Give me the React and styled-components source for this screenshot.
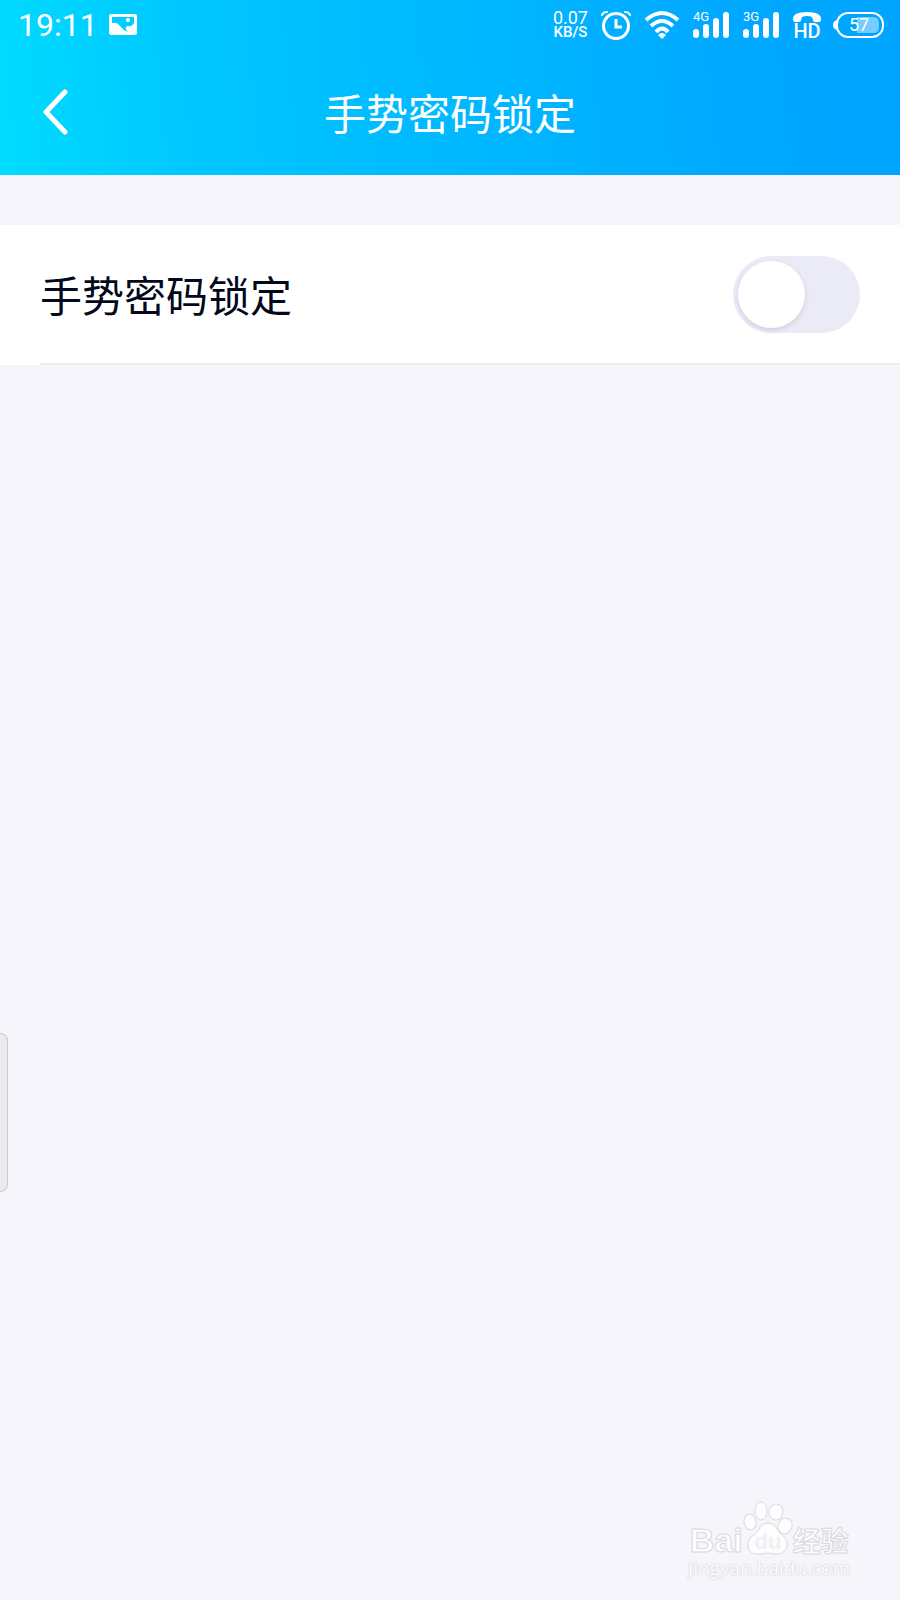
import styled, { createGlobalStyle } from "styled-components";

import { useState } from "react";

export default function App(){
    const [locked, setLocked] = useState(false);

    return(
        <>
            <GlobalStyle />
            <Page>
                <Header>
                    <StatusBar />
                    <NavBar>
                        <BackButton aria-label="返回">
                            <svg width="26" height="46" viewBox="0 0 26 46">
                                <path d="M23 3 L4 23 L23 43" fill="none" stroke="white" strokeWidth="5" strokeLinecap="round" strokeLinejoin="round" />
                            </svg>
                        </BackButton>
                        <Title>手势密码锁定</Title>
                        <span />
                    </NavBar>
                </Header>
                <Setting>
                    <SettingContent>
                        <label htmlFor="gesture-lock">手势密码锁定</label>
                        <Switch
                            id="gesture-lock"
                            type="checkbox"
                            role="switch"
                            checked={locked}
                            onChange={() => setLocked(!locked)}
                        />
                    </SettingContent>
                </Setting>
                <EdgeHandle />
                <Watermark />
            </Page>
        </>
    );
}

function StatusBar(){
    return(
        <StatusContent>
            <StatusGroup gap={11}>
                <Time>19:11</Time>
                <svg width="28" height="24" viewBox="0 0 28 24">
                    <path fillRule="evenodd" fill="white" d="M2 1 H26 Q28 1 28 3 V20 Q28 22 26 22 H2 Q0 22 0 20 V3 Q0 1 2 1 Z M3 4 V10 Q8 9 11 13 Q14 17 19 19 Q15 15 18 13 Q23 14 25 10 V4 Z" />
                    <circle cx="19" cy="7" r="2" fill="white" />
                </svg>
            </StatusGroup>
            <StatusGroup gap={13}>
                <Speed>
                    <Rate>0.07</Rate>
                    <Unit>KB/S</Unit>
                </Speed>
                <svg width="30" height="30" viewBox="0 0 30 30" fill="none" stroke="white">
                    <circle cx="15" cy="16" r="12.500" strokeWidth="3" />
                    <path d="M15 9 V17 H21" strokeWidth="3" />
                    <path d="M1 5 Q2 2 6 2 M24 2 Q28 2 29 5" strokeWidth="2" strokeLinecap="round" />
                </svg>
                <svg width="36" height="30" viewBox="0 0 36 30" fill="none" stroke="white" strokeWidth="4">
                    <path d="M2 10 Q18 -4 34 10" />
                    <path d="M7 16 Q18 6 29 16" />
                    <path d="M12 22 Q18 15 24 22" />
                    <path d="M14 25 Q18 21 22 25 L18 29 Z" fill="white" stroke="none" />
                </svg>
                <Signal network="4G" />
                <Signal network="3G" />
                <svg width="28" height="30" viewBox="0 0 28 30">
                    <path d="M0 9 Q0 2 14 2 Q28 2 28 9 Q28 12 26 12 L22 12 Q20 12 20 10 L19 7 Q14 5 9 7 L8 10 Q8 12 6 12 L2 12 Q0 12 0 9 Z" fill="white" />
                    <SvgText x="14" y="28" size={20} weight={500} textAnchor="middle">HD</SvgText>
                </svg>
                <svg width="50" height="28" viewBox="0 0 50 28">
                    <path d="M3 9 Q-1 10 -1 14 Q-1 18 3 19 Z" fill="white" />
                    <rect x="3" y="2" width="46" height="24" rx="11" fill="none" stroke="white" strokeWidth="2" />
                    <path d="M23 6 H39 Q45 6 45 12 V16 Q45 22 39 22 H23 Z" fill="white" opacity="0.45" />
                    <SvgText x="25" y="20" size={18} weight={400} textAnchor="middle">57</SvgText>
                </svg>
            </StatusGroup>
        </StatusContent>
    );
}

function Signal( {network} ){
    return(
        <svg width="37" height="28" viewBox="0 0 37 28">
            <g stroke="white" strokeWidth="6" strokeLinecap="round">
                <path d="M3 21 V24" />
                <path d="M13 16 V24" />
                <path d="M23 10 V24" />
                <path d="M33 4 V24" />
            </g>
            <SvgText x="0" y="10" size={13} weight={400}>{network}</SvgText>
        </svg>
    );
}

function Watermark(){
    return(
        <WatermarkContent>
            <Brand>
                <BrandLatin>Bai</BrandLatin>
                <svg width="50" height="56" viewBox="0 0 50 56">
                    <g fill="#fdfdfe" stroke="#d8d8de" strokeWidth="1">
                        <ellipse cx="7" cy="22" rx="6" ry="8" transform="rotate(-8 7 22)" />
                        <ellipse cx="18" cy="11" rx="6" ry="9" />
                        <ellipse cx="33" cy="12" rx="7" ry="8" transform="rotate(12 33 12)" />
                        <ellipse cx="42" cy="26" rx="7" ry="8" transform="rotate(20 42 26)" />
                        <path d="M25 23 Q31 23 34 29 Q37 34 42 38 Q46 43 43 49 Q39 55 32 54 Q25 52 18 54 Q9 55 6 50 Q3 44 7 38 Q13 34 16 29 Q19 23 25 23 Z" />
                    </g>
                    <PawText x="25" y="49" textAnchor="middle">du</PawText>
                </svg>
                <BrandChinese>经验</BrandChinese>
            </Brand>
            <Address>jingyan.baidu.com</Address>
        </WatermarkContent>
    );
}


const GlobalStyle = createGlobalStyle`
    * {
        box-sizing: border-box;
    }

    body {
        margin: 0;
        background-color: #f5f5fb;
        font-family: "Noto Sans CJK SC", sans-serif;
    }
`;

const Page = styled.main`
    position: relative;
    min-height: 100vh;
    display: flex;
    flex-direction: column;
`;

const Header = styled.header`
    height: 175px;
    background: linear-gradient(84deg, #00dcff 0%, #00c6ff 22%, #00b8ff 52%, #00a8ff 82%, #00a4ff 100%);
    color: white;
`;

const StatusContent = styled.div`
    height: 50px;
    padding: 0 16px 0 18px;

    display: flex;
    justify-content: space-between;
    align-items: center;

    font-family: Roboto, sans-serif;
`;

const StatusGroup = styled.div`
    display: flex;
    align-items: center;
    gap: ${({gap}) => gap}px;

    svg{
        overflow: visible;
    }
`;

const Time = styled.span`
    font-size: 32px;
    line-height: 50px;
`;

const Speed = styled.div`
    display: flex;
    flex-direction: column;
    align-items: center;
    line-height: 14px;
    font-weight: 500;
`;

const Rate = styled.span`
    font-size: 18px;
    font-weight: 400;
`;

const Unit = styled.span`
    font-size: 15px;
`;

const SvgText = styled.text`
    fill: white;
    font-size: ${({size}) => size}px;
    font-weight: ${({weight}) => weight};
`;

const NavBar = styled.nav`
    height: 125px;
    padding: 0 40px 2px;

    display: grid;
    grid-template-columns: 1fr auto 1fr;
    align-items: center;
`;

const BackButton = styled.button`
    width: 32px;
    height: 64px;
    padding: 0 0 0 2px;
    border: 0;
    background: none;

    display: flex;
    align-items: center;
`;

const Title = styled.h1`
    margin: 0;
    font-size: 42px;
    font-weight: 400;
    line-height: 60px;
`;

const Setting = styled.section`
    margin-top: 50px;
    padding-left: 40px;
    background-color: white;
`;

const SettingContent = styled.div`
    height: 140px;
    padding-right: 40px;
    border-bottom: 2px solid #ededf1;

    display: flex;
    justify-content: space-between;
    align-items: center;

    color: #03081a;
    font-size: 42px;
    line-height: 60px;
`;

const Switch = styled.input`
    appearance: none;
    width: 127px;
    height: 77px;
    margin: 0;
    padding: 5px;
    border-radius: 39px;
    background-color: ${({checked}) => checked ? "#00b4ff" : "#ebebf7"};

    display: flex;
    justify-content: ${({checked}) => checked ? "flex-end" : "flex-start"};

    &::before{
        content: "";
        width: 67px;
        height: 67px;
        border-radius: 50%;
        background-color: white;
        box-shadow: 0 2px 5px #cdcdde;
    }
`;

const EdgeHandle = styled.div`
    position: absolute;
    top: 1033px;
    left: 0;
    width: 8px;
    height: 159px;
    border: 1px solid #cacacc;
    border-left: 0;
    border-radius: 0 8px 8px 0;
    background-color: #ececee;
`;

const WatermarkContent = styled.div`
    margin: auto 50px 20px auto;

    display: flex;
    flex-direction: column;
    align-items: center;
`;

const Brand = styled.div`
    display: flex;
    align-items: flex-end;

    color: #fdfdfe;
    font-weight: 700;
    line-height: 32px;
    -webkit-text-stroke: 1px #d8d8de;
`;

const BrandLatin = styled.span`
    font-family: "Liberation Sans", sans-serif;
    font-size: 34px;
`;

const BrandChinese = styled.span`
    font-size: 28px;
`;

const PawText = styled.text`
    fill: #f0f0f5;
    font-family: "Liberation Sans", sans-serif;
    font-size: 22px;
`;

const Address = styled.span`
    color: #fdfdfe;
    font-family: "Open Sans", sans-serif;
    font-size: 19px;
    line-height: 24px;
    text-shadow: 0 0 2px #bcbcc6;
`;
